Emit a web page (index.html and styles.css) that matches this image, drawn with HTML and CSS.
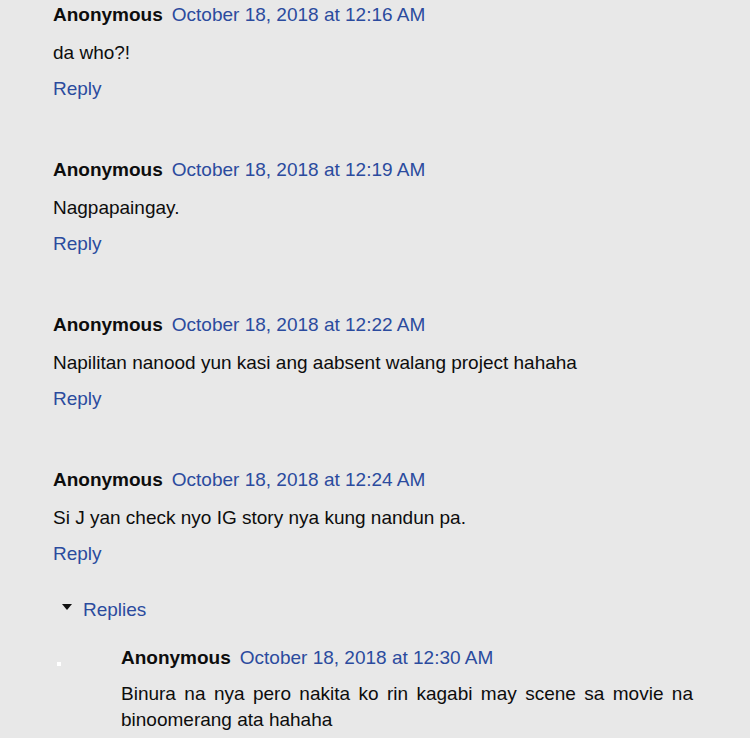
FILE: index.html
```html
<!DOCTYPE html>
<html lang="en">
<head>
  <meta charset="UTF-8" />
  <title>Comments</title>
  <link rel="stylesheet" href="styles.css">
</head>
<body>
  <main class="comments">
    <div class="comment">
      <div class="comment-header">
        <span class="user">Anonymous</span>
        <a class="datetime" href="#">October 18, 2018 at 12:16 AM</a>
      </div>
      <p class="comment-content">da who?!</p>
      <a class="reply-link" href="#">Reply</a>
    </div>

    <div class="comment">
      <div class="comment-header">
        <span class="user">Anonymous</span>
        <a class="datetime" href="#">October 18, 2018 at 12:19 AM</a>
      </div>
      <p class="comment-content">Nagpapaingay.</p>
      <a class="reply-link" href="#">Reply</a>
    </div>

    <div class="comment">
      <div class="comment-header">
        <span class="user">Anonymous</span>
        <a class="datetime" href="#">October 18, 2018 at 12:22 AM</a>
      </div>
      <p class="comment-content">Napilitan nanood yun kasi ang aabsent walang project hahaha</p>
      <a class="reply-link" href="#">Reply</a>
    </div>

    <div class="comment">
      <div class="comment-header">
        <span class="user">Anonymous</span>
        <a class="datetime" href="#">October 18, 2018 at 12:24 AM</a>
      </div>
      <p class="comment-content">Si J yan check nyo IG story nya kung nandun pa.</p>
      <a class="reply-link" href="#">Reply</a>

      <div class="thread">
        <a class="thread-toggle" href="#"><span class="arrow"></span>Replies</a>
        <ol class="thread-chrome">
          <li class="nested">
            <div class="comment-header">
              <span class="user">Anonymous</span>
              <a class="datetime" href="#">October 18, 2018 at 12:30 AM</a>
            </div>
            <p class="comment-content justified">Binura na nya pero nakita ko rin kagabi may scene sa movie na binoomerang ata hahaha</p>
          </li>
        </ol>
      </div>
    </div>
  </main>
</body>
</html>
```

FILE: styles.css
```css
:root {
  --bg: #e8e8e8;
  --text: #0d0d0d;
  --link: #2b4b9e;
}

* {
  box-sizing: border-box;
  margin: 0;
  padding: 0;
}

body {
  background-color: var(--bg);
  color: var(--text);
  font-family: "Liberation Sans", Arial, sans-serif;
  font-size: 19px;
  line-height: 26px;
}

a {
  color: var(--link);
  text-decoration: none;
}

.comments {
  padding: 2px 0 0 53px;
}

.comment {
  margin-bottom: 55px;
}

.comment:last-child {
  margin-bottom: 0;
}

.comment-header {
  display: flex;
  gap: 9px;
}

.user {
  font-weight: bold;
}

.comment-content {
  margin: 12px 0 10px;
}

.reply-link {
  display: inline-block;
}

.thread {
  margin-top: 30px;
}

.thread-toggle {
  display: flex;
  align-items: center;
  margin-left: 9px;
}

.arrow {
  width: 0;
  height: 0;
  border-left: 5px solid transparent;
  border-right: 5px solid transparent;
  border-top: 6px solid #111;
  margin: -6px 11px 0 0;
}

.thread-chrome {
  list-style: none;
  margin-top: 22px;
}

.nested {
  position: relative;
  padding-left: 68px;
}

.nested::before {
  content: "";
  position: absolute;
  left: 4px;
  top: 17px;
  width: 4px;
  height: 4px;
  background: #fff;
}

.justified {
  width: 572px;
  margin: 10px 0 0;
  text-align: justify;
}
```
